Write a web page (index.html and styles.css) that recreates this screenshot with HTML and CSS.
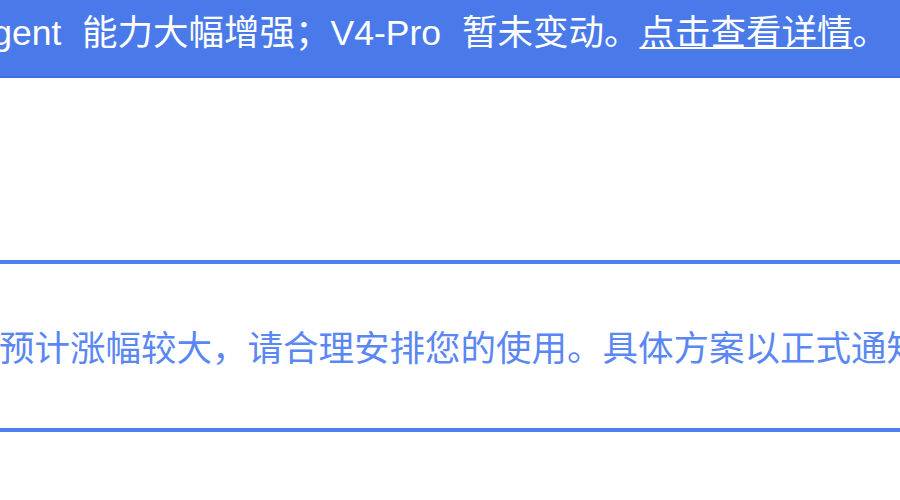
FILE: index.html
```html
<!DOCTYPE html>
<html lang="zh-CN">
<head>
<meta charset="utf-8">
<link rel="stylesheet" href="styles.css">
</head>
<body>
<div class="banner">
  <div class="banner-text">Agent 能力大幅增强；V4-Pro 暂未变动。<a class="link" href="#">点击查看详情</a>。</div>
</div>
<div class="page">
  <div class="notice">
    <p class="notice-text">预计涨幅较大，请合理安排您的使用。具体方案以正式通知为准。</p>
  </div>
</div>
</body>
</html>
```
FILE: styles.css
```css
html, body {
  margin: 0;
  padding: 0;
  background: #ffffff;
  overflow: hidden;
}
body {
  width: 900px;
  height: 500px;
  font-family: "Liberation Sans", "Noto Sans CJK SC", sans-serif;
}
.banner {
  height: 76px;
  background: #4a7aea;
  border-bottom: 2px solid #3d6ee3;
  display: flex;
  justify-content: flex-end;
  align-items: center;
  padding-right: 12px;
  overflow: hidden;
}
.banner-text {
  flex: none;
  white-space: nowrap;
  color: #ffffff;
  font-size: 35.5px;
  line-height: 40px;
  word-spacing: 11px;
  margin-top: -10px;
}
.link {
  color: #ffffff;
  text-decoration: underline;
  text-decoration-thickness: 2px;
  text-underline-offset: 2px;
}
.page {
  padding-top: 182px;
}
.notice {
  border-top: 4px solid #4f7ef2;
  border-bottom: 4px solid #4f7ef2;
  height: 164px;
  display: flex;
  align-items: center;
  overflow: hidden;
}
.notice-text {
  margin: 6px 0 0 -1px;
  white-space: nowrap;
  color: #5a87f3;
  font-size: 35.5px;
  line-height: 40px;
}
```
